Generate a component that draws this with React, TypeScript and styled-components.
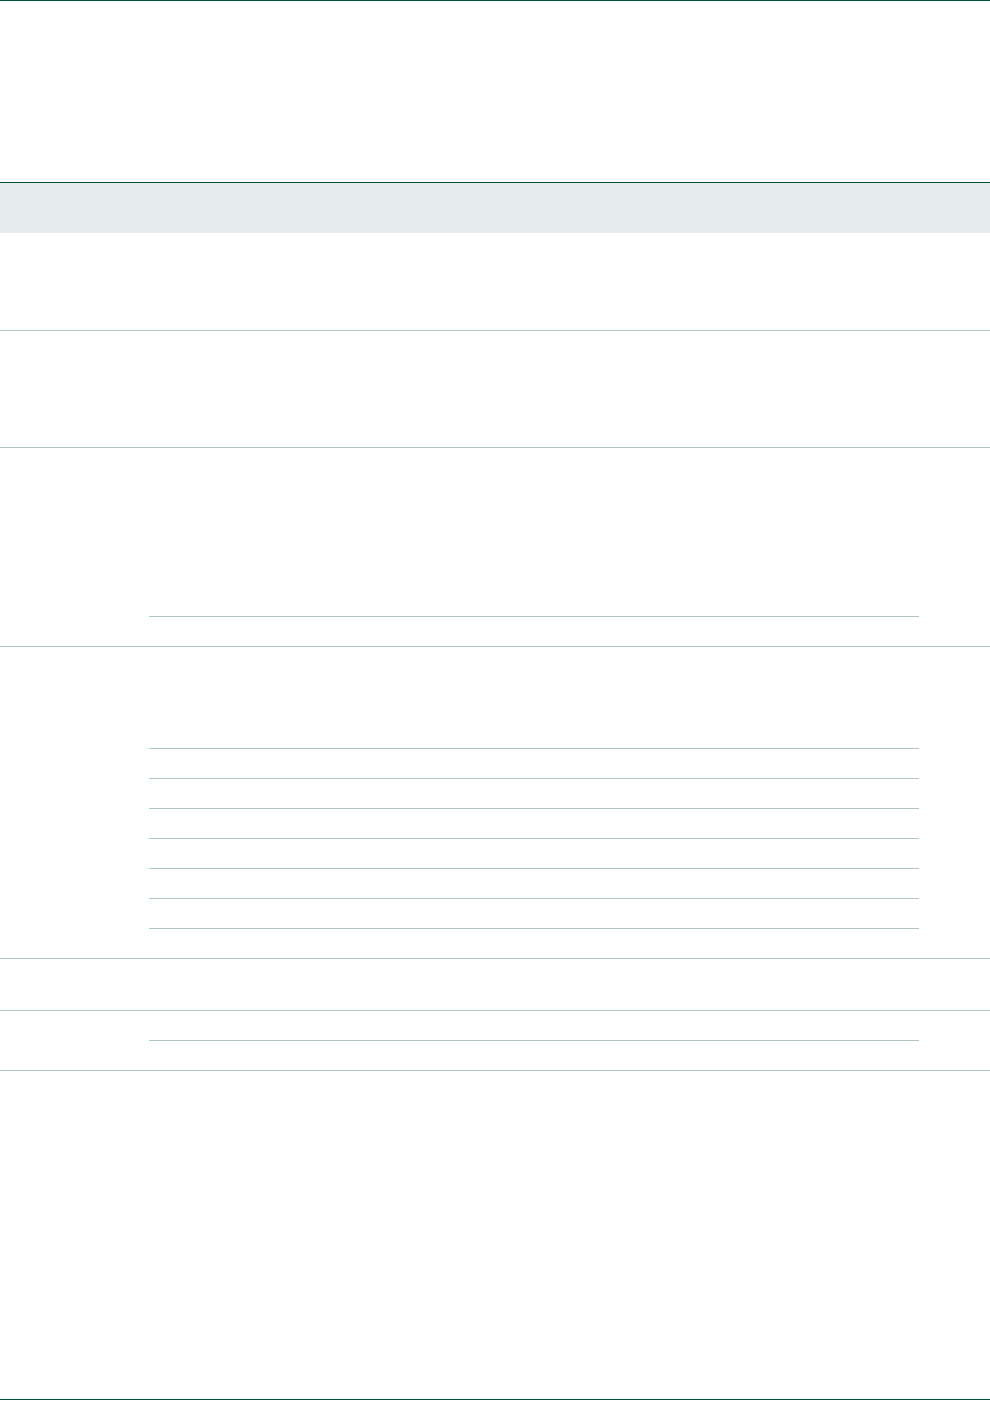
import React from "react";
import styled, { createGlobalStyle } from "styled-components";

const GlobalStyle = createGlobalStyle`
  html, body {
    margin: 0;
    padding: 0;
    background: #ffffff;
    font-family: "Liberation Sans", Arial, sans-serif;
  }
`;

const Page = styled.div`
  width: 990px;
  height: 1401px;
  display: flex;
  flex-direction: column;
  background: #ffffff;
`;

const Masthead = styled.header`
  height: 181px;
  border-top: 1px solid #00503d;
`;

const HeadBand = styled.div`
  height: 50px;
  border-top: 1px solid #00503d;
  background: #e6ecec;
`;

const Row = styled.section`
  display: flex;
  border-bottom: 1px solid #adc9c1;
`;

const LabelCol = styled.div`
  width: 149px;
  flex-shrink: 0;
`;

const ValueCol = styled.div`
  width: 770px;
  display: flex;
  flex-direction: column;
`;

const Cell = styled.div<{ $height: number; $ruled?: boolean }>`
  height: ${(p) => p.$height}px;
  border-bottom: ${(p) => (p.$ruled ? "1px solid #adc9c1" : "none")};
`;

const Footer = styled.footer`
  height: 328px;
  border-bottom: 1px solid #00503d;
`;

type Block = { cells: number[] };

const blocks: Block[] = [
  { cells: [97] },
  { cells: [116] },
  { cells: [168, 29] },
  { cells: [101, 29, 29, 29, 29, 29, 29, 29] },
  { cells: [51] },
  { cells: [29, 29] },
];

export default function App() {
  return (
    <>
      <GlobalStyle />
      <Page>
        <Masthead />
        <HeadBand />
        {blocks.map((b, i) => (
          <Row key={i}>
            <LabelCol />
            <ValueCol>
              {b.cells.map((h, j) => (
                <Cell key={j} $height={h} $ruled={j < b.cells.length - 1} />
              ))}
            </ValueCol>
          </Row>
        ))}
        <Footer />
      </Page>
    </>
  );
}
